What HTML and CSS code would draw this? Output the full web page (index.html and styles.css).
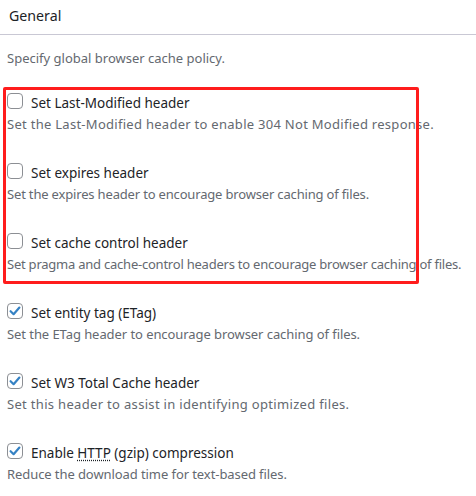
FILE: index.html
```html
<!DOCTYPE html>
<html lang="en">
<head>
<meta charset="utf-8">
<title>General</title>
<link rel="stylesheet" href="styles.css">
</head>
<body>
<div class="page">
  <div class="header">General</div>
  <p class="intro">Specify global browser cache policy.</p>
  <ul class="options">
    <li class="option">
      <label class="row"><span class="box"></span><span class="label">Set Last-Modified header</span></label>
      <p class="desc wide">Set the Last-Modified header to enable 304 Not Modified response.</p>
    </li>
    <li class="option">
      <label class="row"><span class="box"></span><span class="label">Set expires header</span></label>
      <p class="desc tight">Set the expires header to encourage browser caching of files.</p>
    </li>
    <li class="option">
      <label class="row"><span class="box"></span><span class="label">Set cache control header</span></label>
      <p class="desc tighter">Set pragma and cache-control headers to encourage browser caching of files.</p>
    </li>
    <li class="option">
      <label class="row"><span class="box checked"><svg viewBox="0 0 16 16" width="16" height="16"><path d="M3.6 8.2 L6.6 11.2 L12.4 4.6" fill="none" stroke="#3582c4" stroke-width="2.2" stroke-linecap="round" stroke-linejoin="round"/></svg></span><span class="label">Set entity tag (ETag)</span></label>
      <p class="desc snug">Set the ETag header to encourage browser caching of files.</p>
    </li>
    <li class="option">
      <label class="row"><span class="box checked"><svg viewBox="0 0 16 16" width="16" height="16"><path d="M3.6 8.2 L6.6 11.2 L12.4 4.6" fill="none" stroke="#3582c4" stroke-width="2.2" stroke-linecap="round" stroke-linejoin="round"/></svg></span><span class="label">Set W3 Total Cache header</span></label>
      <p class="desc wider">Set this header to assist in identifying optimized files.</p>
    </li>
    <li class="option">
      <label class="row"><span class="box checked"><svg viewBox="0 0 16 16" width="16" height="16"><path d="M3.6 8.2 L6.6 11.2 L12.4 4.6" fill="none" stroke="#3582c4" stroke-width="2.2" stroke-linecap="round" stroke-linejoin="round"/></svg></span><span class="label">Enable <abbr title="Hypertext Transfer Protocol">HTTP</abbr> (gzip) compression</span></label>
      <p class="desc slight">Reduce the download time for text-based files.</p>
    </li>
  </ul>
  <div class="highlight"></div>
</div>
</body>
</html>
```
FILE: styles.css
```css
html, body {
  margin: 0;
  padding: 0;
  background: #ffffff;
}
body {
  font-family: "Noto Sans", "Open Sans", sans-serif;
  font-size: 13px;
  color: #1d2327;
}
.page {
  position: relative;
  width: 476px;
  height: 496px;
  overflow: hidden;
}
.header {
  height: 34px;
  line-height: 32px;
  padding-left: 9px;
  font-size: 14.2px;
  color: #1d2327;
  border-bottom: 1px solid #c9c8d4;
}
.intro {
  margin: 13px 0 0 7px;
  line-height: 20px;
  color: #646970;
}
.options {
  list-style: none;
  margin: 24px 0 0 0;
  padding: 0;
}
.option {
  height: 70px;
  padding-left: 7px;
}
.row {
  display: flex;
  align-items: flex-start;
  gap: 8px;
}
.box {
  box-sizing: border-box;
  width: 16px;
  height: 16px;
  margin-top: 1px;
  border: 1px solid #8c8f94;
  border-radius: 4px;
  background: #fff;
  flex: none;
  display: flex;
  align-items: center;
  justify-content: center;
}
.box svg {
  display: block;
  flex: none;
}
.label {
  font-size: 13.5px;
  line-height: 20px;
  margin-top: 1px;
  color: #1d2327;
}
abbr {
  text-decoration: underline dotted;
  text-underline-offset: 2px;
}
.desc {
  margin: 1px 0 0 0;
  line-height: 20px;
  white-space: nowrap;
  color: #646970;
}
.desc.wide {
  letter-spacing: 0.28px;
}
.desc.wider {
  letter-spacing: 0.32px;
}
.desc.tight {
  letter-spacing: -0.17px;
}
.desc.tighter {
  letter-spacing: -0.23px;
}
.desc.snug {
  letter-spacing: -0.07px;
}
.desc.slight {
  letter-spacing: -0.08px;
}
.highlight {
  position: absolute;
  left: 3px;
  top: 87px;
  width: 410px;
  height: 191px;
  border: 3px solid #ff1c1c;
  border-radius: 2px;
  pointer-events: none;
}
```
